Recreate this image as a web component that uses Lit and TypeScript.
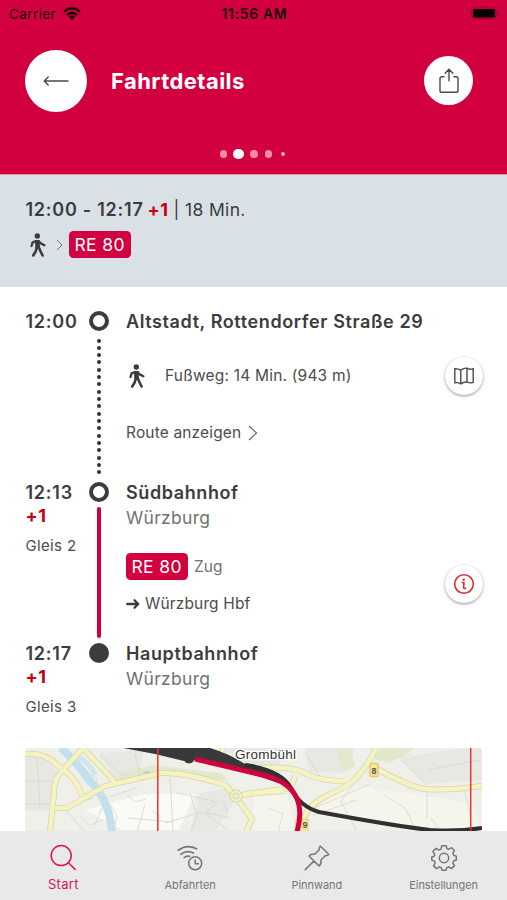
import { LitElement, html, css, svg } from "lit";
import { customElement, property } from "lit/decorators.js";

const walker = html`<svg width="16" height="24" viewBox="0 0 16 24" fill="none" stroke="#3c3c3c" stroke-linecap="round" stroke-linejoin="round">
  <circle cx="7.3" cy="3" r="2.7" fill="#3c3c3c" stroke="none" />
  <path d="M4.8 6.900H9.600L10 14.800H5.400Z" fill="#3c3c3c" stroke="none" />
  <path d="M6.200 8L2.600 9.400L1.500 13M8.500 8.200L10.800 10.400L14.400 12.200" stroke-width="2.300" />
  <path d="M6.800 14L5.800 18.300L3.200 22.500M8.600 14L10.400 18L12.600 22.500" stroke-width="2.600" />
</svg>`;

const shareIcon = html`<svg width="20" height="26" viewBox="0 0 20 26" fill="none" stroke="#4a4a4a" stroke-width="1.4" stroke-linecap="round" stroke-linejoin="round">
  <path d="M5 8.7H2.9Q1 8.7 1 10.6V22.4Q1 24.3 2.9 24.3H17.1Q19 24.3 19 22.4V10.6Q19 8.7 17.1 8.7H15" />
  <path d="M10 12.7V1.2M6.2 5.2L10 1.2L13.8 5.2" />
</svg>`;

const mapIcon = html`<svg width="20" height="18" viewBox="0 0 20 18" fill="none" stroke="#4a4a4a" stroke-width="1.4" stroke-linejoin="round">
  <path d="M.8 1.8Q4 1.600 6.800 3.200Q10 .600 13 1.200Q16 3 19.200 1.600V15.400Q16 16.600 13 15Q10 14.600 6.800 16.800Q4 15.200 .8 15.800ZM6.800 3.200V16.800M13 1.200V15" />
</svg>`;

const infoIcon = html`<svg width="22" height="22" viewBox="0 0 22 22" fill="none" stroke="#d8322f" stroke-width="1.6" stroke-linecap="round" stroke-linejoin="round">
  <circle cx="11" cy="11" r="9.3" />
  <path d="M9.2 9.6H11L10.6 14.8Q10.7 16 12.5 15.2" />
  <circle cx="10.700" cy="6.700" r="1.200" fill="#d8322f" stroke="none" />
</svg>`;

const tabs = [
  { label: "Start", cls: "active", icon: svg`<circle cx="12.2" cy="11.6" r="10" /><path d="M19.4 18.800L26.200 25.400" />` },
  { label: "Abfahrten", cls: "departures", icon: svg`<path d="M2.300 6.200Q11-.300 20.500 4.800M5 10.200Q11 5.600 17.400 9M8.200 13.600Q10.500 11.600 13.500 12.400" stroke-width="1.700" /><circle cx="19.200" cy="19.300" r="6.500" /><path d="M19.200 15.900V19.700H22.400" />` },
  { label: "Pinnwand", cls: "pins", icon: svg`<path d="M17.5 2.200L25.700 10.200Q25 12 22.200 11.800L18 16Q18.600 20 16 22L6 12Q8 9.400 12 10L16.200 5.800Q15.800 3.400 17.500 2.200ZM11 17L2.200 25.600" />` },
  { label: "Einstellungen", cls: "settings", icon: svg`<circle cx="14" cy="14" r="4.7" /><path d="M16.2 1.8H11.8L11.1 5.1Q10 5.5 8.9 6.1L6 4.4L2.9 7.5L4.9 10.4Q4.3 11.5 4.1 12.3L1.8 12.9V16.2L4.3 16.9Q4.6 18 5.2 18.9L3.6 21.9L6.5 24.6L9.4 22.8Q10.4 23.4 11.3 23.7L12 26.3H16L16.8 23.7Q17.9 23.4 18.7 22.8L21.6 24.5L24.5 21.6L22.8 18.8Q23.4 17.9 23.8 16.8L26.3 16V12.2L23.8 11.4Q23.4 10.3 22.8 9.4L24.4 6.5L21.6 3.7L18.8 5.3Q17.8 4.8 16.9 4.6Z" />` },
];

@customElement("city-map")
class CityMap extends LitElement {
  static styles = css`
    :host { display: block; height: 83px; }
    svg { display: block; overflow: visible; }
    .label { font: 13.5px "Liberation Sans", Arial, sans-serif; fill: #333; stroke: #fff; stroke-width: 2.5px; paint-order: stroke; }
    .shield { font: bold 9px "Liberation Sans", Arial, sans-serif; fill: #555; text-anchor: middle; }
  `;
  render() {
    const roads = [
      "M0 6Q20 4 32 17Q52 30 57 48",
      "M25 84L29 45Q29 31 37 23L58 0",
      "M30 60H42L80 38L136 25Q160 24 200 37Q206 44 211 48",
      "M58 0L90 34",
      "M211 48L229 45L260 43",
      "M213 52L227 71L221 84",
      "M223 21Q262 17 278 24Q292 33 320 33",
      "M224 46L250 42L266 40L270 28",
      "M278 72Q284 56 303 47Q325 38 333 28Q345 14 351 0",
      "M350 20Q385 39 400 41Q420 43 457 38",
      "M197 0Q198 14 220 20",
    ];
    return html`<svg width="457" height="83" viewBox="0 0 457 83" fill="none">
      <defs><clipPath id="frame"><path d="M0 83V4Q0 0 4 0H453Q457 0 457 4V83Z" /></clipPath></defs>
      <g clip-path="url(#frame)">
      <rect width="457" height="84" fill="#f0f0ea" />
      <path d="M0 8L22 10L32 24L28 62H0Z M73 5L118 2L116 28L92 34Z M175 45L205 40L210 52L190 84H165Z" fill="#e8e8e3" />
      <path d="M280 0H330L318 25L284 24Z M375 10L440 0H457V32L400 36Z M198 0H255V18L222 18Z" fill="#e7e7e4" />
      <path d="M228 48L262 46L270 84H230Z M285 66L320 36L375 44L445 55L457 84H390L300 65Z" fill="#f5f5ec" />
      <path d="M355 0H390L365 15L349 11Z M93 26L128 17L195 25L204 33L136 24L95 33Z M312 4L326 0L330 18L318 24Z" fill="#e2e8cb" />
      <path d="M60 62L120 46L170 46L154 82L98 82Z" fill="#fafaf7" />
      <path d="M50 18L73 31L67 38L80 50L112 40M28 62L68 50M75 7L98 28M110 6L115 28M145 28L148 84M152 45L193 54L180 65L205 84M120 57L112 84M103 70L148 74M280 5L299 35M285 62L345 36M330 34L316 53L332 84M376 12L402 38V70M402 22L455 12M359 47L380 60L392 84M288 67L332 52M0 33H28M0 56H28M12 10L15 58M42 64L60 84M70 77L78 57M406 70L415 82M439 40L446 70M165 45L172 68L166 84M140 75L178 64L205 70" stroke="#d5d6cf" stroke-width=".8" />
      <path d="M127 63L135 68L132 84M178 58L198 52L203 66M86 57L92 69L88 84M98 43L110 54L121 51M55 68L65 77L78 72M362 12L386 6M242 60L258 66L253 84" stroke="#dedfd7" stroke-width="1" />
      <path d="M36 0Q51 13 65 33Q84 51 87 84" stroke="#c3e0ec" stroke-width="8" />
      <path d="M52 8Q65 15 70 27" stroke="#cfe6ef" stroke-width="5" />
      <ellipse cx="122" cy="25" rx="4" ry="2" fill="#aed7ef" />
      ${roads.map(d => svg`<path d=${d} stroke="#d6d3b2" stroke-width="6" />`)}
      ${roads.map(d => svg`<path d=${d} stroke="#f5f3bf" stroke-width="4.500" />`)}
      <circle cx="211" cy="48" r="4.5" fill="#eceadf" stroke="#d0cda6" stroke-width="4" />
      <circle cx="211" cy="48" r="4.5" stroke="#f4f2b9" stroke-width="2.5" />
      <path d="M98 0H185Q205 6 220 16Q246 22 258 31L253 35Q210 20 170 12L159 13Q129 5 98 0Z" fill="#383938" />
      <circle cx="164" cy="10" r="5.5" fill="#383938" />
      <path d="M220 17Q256 22 266 40Q274 58 294 64Q370 78 405 82Q430 84 457 80" stroke="#30312f" stroke-width="4.2" />
      <rect x="271" y="71" width="12" height="14" rx="1" fill="#f3e7a0" stroke="#efc467" />
      <text class="shield" x="280" y="80">9</text>
      <path d="M170 11L238 27Q285 38 272 84" stroke="#d2003f" stroke-width="5" />
      <rect x="345" y="15.500" width="8" height="13" rx="1" fill="#f3e7a0" stroke="#efc467" stroke-width="1.4" />
      <text class="shield" x="349" y="25.500">8</text>
      <path d="M132.800 0V84M445.700 0V84" stroke="#ed3528" stroke-width="1.500" />
      </g>
      <text class="label" x="210" y="10.500" textLength="61">Grombühl</text>
    </svg>`;
  }
}

@customElement("line-badge")
class LineBadge extends LitElement {
  @property() line = "";
  static styles = css`
    :host { display: flex; align-items: center; justify-content: center; width: 61.5px; height: 27px; border-radius: 4.5px; background: #d2003f; color: #fff; font-size: 17.5px; letter-spacing: .4px; }
  `;
  render() { return html`${this.line}`; }
}

@customElement("app-root")
class AppRoot extends LitElement {
  static styles = css`
    :host { display: flex; flex-direction: column; height: 900px; overflow: hidden; background: #fff; color: #3c3c3c; font-family: Inter, "Liberation Sans", sans-serif; white-space: nowrap; }
    * { box-sizing: border-box; }
    svg { display: block; flex: none; }
    .header { flex: none; height: 175px; background: #d2003f; border-bottom: 1px solid #e58fa9; display: flex; flex-direction: column; }
    .status { height: 27px; display: grid; grid-template-columns: 1fr auto 1fr; align-items: center; padding: 0 7px 0 9px; color: #20000a; font-size: 13.5px; }
    .carrier { display: flex; align-items: center; gap: 7px; letter-spacing: .4px; }
    .clock { font-weight: 600; font-size: 14px; letter-spacing: .65px; }
    .battery { justify-self: end; }
    .titlebar { height: 107px; display: flex; align-items: center; padding: 0 34px 0 25px; }
    .round { display: flex; align-items: center; justify-content: center; border-radius: 50%; background: #fff; flex: none; }
    .back { width: 62px; height: 62px; }
    .share { width: 49px; height: 49px; }
    .title { flex: 1; margin: 0 0 0 24px; color: #fff; font-size: 22px; font-weight: 700; letter-spacing: .45px; }
    .pager { height: 40px; display: flex; align-items: center; justify-content: center; gap: 7px; padding-right: 2px; }
    .dot { width: 7.6px; height: 7.6px; border-radius: 50%; background: #f08cab; }
    .current { width: 10.5px; height: 10.5px; margin: 0 -1px; background: #fff; }
    .small { width: 4px; height: 4px; margin-left: 2px; background: #f3a9bf; }
    .summary { flex: none; height: 112px; background: #d9e1e7; padding: 23px 25.5px; }
    .times { height: 24px; line-height: 24px; font-size: 17.5px; display: flex; gap: 5px; letter-spacing: .35px; }
    .times b { font-weight: 600; font-size: 18px; letter-spacing: .75px; }
    .late { color: #c50014; font-weight: 700; font-size: 18px; letter-spacing: .5px; height: 24px; line-height: 24px; }
    .times .late { margin-left: -1px; }
    .legs { display: flex; align-items: center; height: 27px; margin-top: 9px; padding-left: 4px; }
    .legs .chevron { margin: 0 6.5px 0 10px; }
    .trip { flex: none; height: 461px; padding: 24px 23px 0 25.5px; }
    .leg { display: grid; grid-template-columns: 63px 20px minmax(0, 1fr) 40px; }
    .walk { height: 171px; }
    .ride { height: 161px; }
    .col { display: flex; flex-direction: column; align-items: flex-start; }
    .time { height: 22px; line-height: 22px; font-size: 18px; font-weight: 600; letter-spacing: .75px; }
    .platform { margin-top: 7px; height: 22px; line-height: 22px; font-size: 15px; color: #4c4c4c; letter-spacing: .35px; }
    .rail { display: flex; flex-direction: column; align-items: center; }
    .stop { width: 20px; height: 20px; border-radius: 50%; border: 4px solid #3c3c3c; flex: none; }
    .final { background: #3c3c3c; }
    .dots { flex: 1; display: flex; flex-direction: column; justify-content: space-between; padding: 7.5px 0; }
    .dots i { width: 4px; height: 4px; border-radius: 50%; background: #333; }
    .track { flex: 1; width: 4px; margin: 5px 0 5px; border-radius: 2px; background: #d2003f; }
    .body { padding-left: 17.5px; }
    .name { height: 22px; line-height: 22px; font-size: 18px; font-weight: 600; letter-spacing: .6px; }
    .town { height: 26px; line-height: 28px; font-size: 17.5px; color: #727272; letter-spacing: .3px; }
    .foot { display: flex; align-items: center; height: 26px; margin-top: 30px; padding-left: 3px; gap: 20px; font-size: 15.5px; color: #4c4c4c; letter-spacing: .2px; }
    .foot span { margin-top: -2px; }
    .route { display: flex; align-items: center; height: 22px; margin-top: 33px; gap: 7px; font-size: 15.5px; color: #4c4c4c; letter-spacing: .15px; }
    .route span { margin-top: -1px; }
    .product { display: flex; align-items: center; gap: 6.5px; height: 27px; margin-top: 22.5px; font-size: 15.5px; color: #727272; }
    .direction { display: flex; align-items: center; gap: 5px; height: 20px; margin-top: 14px; font-size: 15.5px; color: #4c4c4c; letter-spacing: .15px; }
    .action { width: 38px; height: 38px; margin-left: 1px; box-shadow: 0 1px 3px rgba(0, 0, 0, .42); }
    .show-map { margin-top: 46px; }
    .show-info { margin-top: 83px; }
    .map-card { flex: none; height: 83px; padding: 0 25px; }
    .tabs { flex: none; height: 69px; background: #e9e9e9; display: grid; grid-template-columns: repeat(4, 1fr); position: relative; }
    .tab { display: flex; flex-direction: column; align-items: center; padding-top: 13px; color: #767676; font-size: 11px; letter-spacing: -.05px; }
    .tab svg { fill: none; stroke: currentColor; stroke-width: 1.5; stroke-linecap: round; stroke-linejoin: round; }
    .tab span { height: 18px; line-height: 18px; margin-top: 4px; }
    .active { color: #d2195a; font-size: 13px; letter-spacing: .3px; }
    .active span { margin-top: 3px; }
  `;
  render() {
    return html`
      <header class="header">
        <div class="status">
          <div class="carrier"><span class="carrier-name">Carrier</span>
            <svg width="18" height="14" viewBox="0 0 18 14" fill="none" stroke="#20000a" stroke-width="2.5">
              <path d="M1 4.7Q9-2.3 17 4.7M4 8Q9 3.7 14 8" />
              <path d="M5.8 9.8Q9 7.3 12.2 9.8L9 13.2Z" fill="#20000a" stroke="none" />
            </svg>
          </div>
          <div class="clock">11:56 AM</div>
          <svg class="battery" width="29" height="13" viewBox="0 0 29 13">
            <rect x=".8" y=".8" width="24.4" height="11" rx="3" fill="none" stroke="#99002d" />
            <rect x="2" y="2" width="22" height="8.6" rx="1.5" fill="#080003" />
            <path d="M26.5 4.5Q28.7 6.3 26.5 8.3Z" fill="#8d002a" />
          </svg>
        </div>
        <div class="titlebar">
          <div class="round back"><svg width="26" height="12" viewBox="0 0 26 12" fill="none" stroke="#4a4a4a" stroke-width="1.4" stroke-linecap="round" stroke-linejoin="round"><path d="M25 6H1.2M5.2 2L1.2 6L5.2 10" /></svg></div>
          <h1 class="title"><span>Fahrtdetails</span></h1>
          <div class="round share">${shareIcon}</div>
        </div>
        <div class="pager"><i class="dot"></i><i class="dot current"></i><i class="dot"></i><i class="dot"></i><i class="dot small"></i></div>
      </header>
      <section class="summary">
        <div class="times"><b>12:00 - 12:17</b><span class="late">+1</span><span>| 18 Min.</span></div>
        <div class="legs">${walker}
          <svg class="chevron" width="7" height="12" viewBox="0 0 7 12" fill="none" stroke="#777"><path d="M1 1L6 6L1 11" /></svg>
          <line-badge line="RE 80"></line-badge>
        </div>
      </section>
      <main class="trip">
        <div class="leg walk">
          <div class="col"><span class="time">12:00</span></div>
          <div class="rail"><i class="stop"></i><div class="dots">${Array.from({ length: 19 }, () => html`<i></i>`)}</div></div>
          <div class="col body">
            <span class="name">Altstadt, Rottendorfer Straße 29</span>
            <div class="foot">${walker}<span>Fußweg: 14 Min. (943 m)</span></div>
            <div class="route"><span>Route anzeigen</span><svg width="10" height="16" viewBox="0 0 10 16" fill="none" stroke="#666" stroke-width="1.2"><path d="M1 1L8.5 8L1 15" /></svg></div>
          </div>
          <div class="round action show-map">${mapIcon}</div>
        </div>
        <div class="leg ride">
          <div class="col"><span class="time">12:13</span><span class="late">+1</span><span class="platform">Gleis 2</span></div>
          <div class="rail"><i class="stop"></i><i class="track"></i></div>
          <div class="col body">
            <span class="name">Südbahnhof</span><span class="town">Würzburg</span>
            <div class="product"><line-badge line="RE 80"></line-badge><span>Zug</span></div>
            <div class="direction"><svg width="14" height="12" viewBox="0 0 14 12" fill="none" stroke="#3c3c3c" stroke-width="2.3" stroke-linecap="round" stroke-linejoin="round"><path d="M1.200 6H12M8.500 2.200L12.300 6L8.500 9.800" /></svg><span>Würzburg Hbf</span></div>
          </div>
          <div class="round action show-info">${infoIcon}</div>
        </div>
        <div class="leg">
          <div class="col"><span class="time">12:17</span><span class="late">+1</span><span class="platform">Gleis 3</span></div>
          <div class="rail"><i class="stop final"></i></div>
          <div class="col body"><span class="name">Hauptbahnhof</span><span class="town">Würzburg</span></div>
        </div>
      </main>
      <section class="map-card"><city-map></city-map></section>
      <nav class="tabs">${tabs.map(t => html`<div class="tab ${t.cls}"><svg width="28" height="28" viewBox="0 0 28 28">${t.icon}</svg><span>${t.label}</span></div>`)}</nav>
    `;
  }
}
